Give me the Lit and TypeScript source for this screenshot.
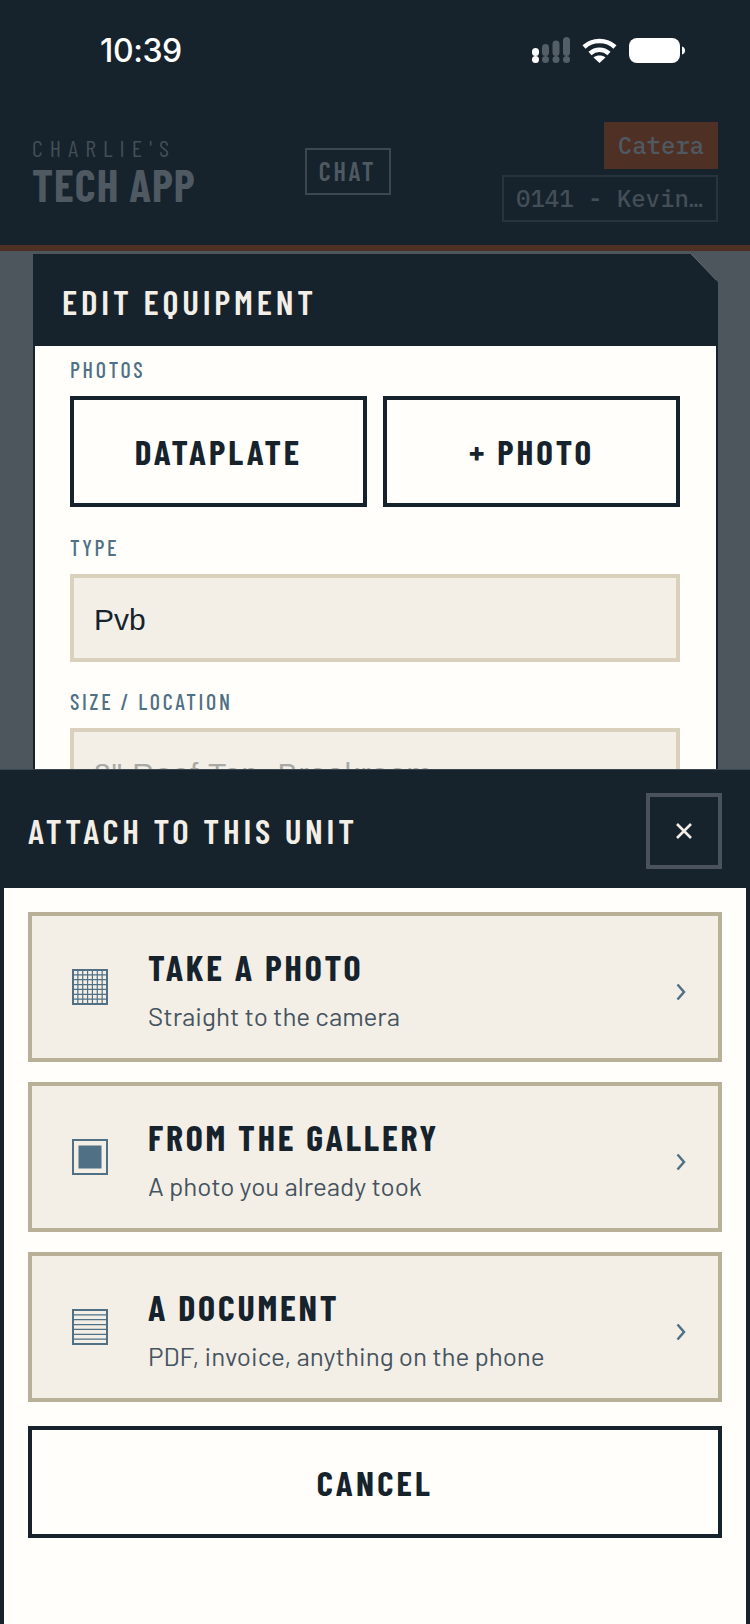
import {css, html, LitElement, svg} from 'lit';
import {customElement} from 'lit/decorators.js';

const gridLines = (horizontalOnly: boolean) => {
  const inner = [1, 2, 3, 4, 5, 6];
  const step = 34 / 7;
  return svg`
    <rect x="1" y="1" width="34" height="34" fill="none" stroke="currentColor" stroke-width="2"/>
    ${inner.map((i) => svg`<path d="M1 ${1 + step * i}H35" stroke="currentColor" stroke-width="1.2"/>`)}
    ${horizontalOnly ? null : inner.map((i) => svg`<path d="M${1 + step * i} 1V35" stroke="currentColor" stroke-width="1.2"/>`)}
  `;
};

const ICONS = {
  camera: gridLines(false),
  gallery: svg`
    <rect x="1" y="1" width="34" height="34" fill="none" stroke="currentColor" stroke-width="2"/>
    <rect x="6.500" y="6.500" width="23" height="23" fill="currentColor"/>
  `,
  doc: gridLines(true),
};

const OPTIONS = [
  {icon: ICONS.camera, title: 'TAKE A PHOTO', sub: 'Straight to the camera'},
  {icon: ICONS.gallery, title: 'FROM THE GALLERY', sub: 'A photo you already took'},
  {icon: ICONS.doc, title: 'A DOCUMENT', sub: 'PDF, invoice, anything on the phone'},
];

@customElement('app-root')
export class AppRoot extends LitElement {
  static styles = css`
    :host {
      display: block;
      --dark: #16222c;
      --cream: #f3efe7;
      --steel: #4f7085;
      --cond: "Barlow Condensed", "Roboto", sans-serif;
      --mono: "IBM Plex Mono", "Liberation Mono", monospace;
    }
    * { box-sizing: border-box; }

    .screen {
      position: relative;
      width: 750px;
      height: 1624px;
      overflow: hidden;
      background: #4e565d;
    }

    .top {
      height: 251px;
      background: var(--dark);
      border-bottom: 6px solid #4f3024;
    }
    .status {
      display: flex;
      align-items: center;
      justify-content: space-between;
      height: 100px;
      padding: 0 65px 0 100px;
      color: #fff;
    }
    .time {
      font: 500 32px "Inter", "Liberation Sans", sans-serif;
      letter-spacing: -0.4px;
    }
    .status-icons { display: flex; align-items: center; gap: 12px; }

    .bar {
      display: flex;
      align-items: center;
      justify-content: space-between;
      height: 100px;
      margin-top: 22px;
      padding: 0 32px;
    }
    .logo { display: flex; flex-direction: column; gap: 4px; width: 161px; margin-top: -4px; }
    .logo-small {
      font: 400 24px/24px var(--cond);
      letter-spacing: 7.100px;
      color: #434e57;
      white-space: nowrap;
    }
    .logo-big {
      font: 700 45px/40px var(--cond);
      letter-spacing: 1px;
      color: #4f5962;
      white-space: nowrap;
    }
    .chat {
      display: flex;
      align-items: center;
      justify-content: center;
      width: 86px;
      height: 47px;
      margin-top: -2px;
      padding-bottom: 2px;
      border: 2px solid #3d4750;
      font: 600 26px var(--cond);
      letter-spacing: 2.800px;
      color: #4f5962;
    }
    .bar-right { display: flex; flex-direction: column; align-items: flex-end; gap: 6px; width: 216px; }
    .tech {
      display: flex;
      align-items: center;
      justify-content: center;
      width: 114px;
      height: 47px;
      padding-bottom: 2px;
      background: #4f3024;
      font: 500 24px var(--mono);
      color: #4f5962;
    }
    .job {
      display: flex;
      align-items: center;
      width: 216px;
      height: 47px;
      padding: 0 0 2px 12px;
      border: 2px solid #27343e;
      font: 500 24px var(--mono);
      color: #434e57;
      white-space: nowrap;
    }

    .modal {
      height: 600px;
      margin: 3px 32px 0 33px;
      background: #fffefa;
      border: solid var(--dark);
      border-width: 0 2px;
      clip-path: polygon(0 0, 658px 0, 685px 28px, 685px 100%, 0 100%);
    }
    .modal-head {
      display: flex;
      align-items: center;
      height: 92px;
      margin: 0 -2px;
      padding: 2px 29px 0;
      background: var(--dark);
      font: 600 35px var(--cond);
      letter-spacing: 3.800px;
      color: var(--cream);
    }
    .modal-body { padding: 12px 36px 0 35px; }
    .label {
      display: block;
      margin-top: -1px;
      font: 500 22px var(--cond);
      letter-spacing: 2.700px;
      line-height: 24px;
      color: var(--steel);
    }
    .photo-row {
      display: grid;
      grid-template-columns: 1fr 1fr;
      gap: 16px;
      margin: 15px 0 29px;
    }
    .photo-btn {
      display: flex;
      align-items: center;
      justify-content: center;
      height: 111px;
      padding-bottom: 2px;
      border: 4px solid var(--dark);
      font: 700 35px var(--cond);
      letter-spacing: 3px;
      color: var(--dark);
    }
    .input {
      display: flex;
      align-items: center;
      height: 88px;
      margin: 15px 0 28px;
      padding: 3px 20px 0;
      border: 4px solid #d9d1bc;
      background: var(--cream);
      font: 400 30px "Liberation Sans", sans-serif;
      color: var(--dark);
    }
    .input.placeholder { color: #a9a9a6; letter-spacing: 0.900px; }

    /* bottom sheet lies over the modal */
    .sheet {
      position: absolute;
      left: 0;
      right: 0;
      top: 769px;
      bottom: 0;
      background: #fffefa;
      border: solid var(--dark);
      border-width: 0 4px;
    }
    .sheet-head {
      display: flex;
      align-items: center;
      justify-content: space-between;
      height: 119px;
      margin: 0 -4px;
      padding: 3px 28px 0;
      background: var(--dark);
      border-top: 1px solid #3a4650;
      font: 600 35px var(--cond);
      letter-spacing: 3.800px;
      color: var(--cream);
    }
    .sheet-title { margin-top: -2px; }
    .close {
      display: flex;
      align-items: center;
      justify-content: center;
      width: 76px;
      height: 76px;
      border: 4px solid #4a535c;
    }
    .sheet-body {
      display: flex;
      flex-direction: column;
      gap: 20px;
      padding: 24px 24px 0;
    }
    .option {
      display: flex;
      align-items: center;
      height: 150px;
      padding: 0 32px 0 40px;
      border: 4px solid #b9b098;
      background: var(--cream);
    }
    .option-icon { flex: none; width: 36px; height: 36px; color: var(--steel); }
    .option-text { flex: 1; margin-left: 40px; padding-top: 3px; }
    .option-title {
      font: 700 36px var(--cond);
      line-height: 42px;
      letter-spacing: 2.800px;
      color: var(--dark);
    }
    .option-sub {
      margin-top: 12px;
      font: 400 26px "Barlow", sans-serif;
      line-height: 32px;
      color: #46545f;
    }
    .chevron { flex: none; width: 10px; height: 18px; margin-top: 9px; color: var(--steel); }
    .cancel {
      display: flex;
      align-items: center;
      justify-content: center;
      height: 112px;
      margin-top: 4px;
      border: 4px solid var(--dark);
      font: 700 35px var(--cond);
      letter-spacing: 3.200px;
      color: var(--dark);
    }
  `;

  renderStatusIcons() {
    return html`
      <div class="status-icons">
        <svg width="38" height="26" viewBox="0 0 38 26">
          <g fill="#fff"><circle cx="3.500" cy="22.500" r="3.500"/><rect x="0" y="11" width="7" height="8" rx="3.500"/></g>
          <g fill="#545e67">
            <circle cx="13.500" cy="22.500" r="3.500"/><circle cx="24" cy="22.500" r="3.500"/><circle cx="34.500" cy="22.500" r="3.500"/>
            <rect x="10" y="7" width="7" height="12" rx="3.500"/>
            <rect x="20.500" y="3.500" width="7" height="15.500" rx="3.500"/>
            <rect x="31" y="0" width="7" height="19" rx="3.500"/>
          </g>
        </svg>
        <svg width="35" height="25" viewBox="0 0 35 25" fill="none" stroke="#fff" stroke-width="4.500">
          <path d="M2 9C10.500 1 24.500 1 33 9"/>
          <path d="M8 15.500C13.500 10.500 21.500 10.500 27 15.500"/>
          <path d="M17.500 25l-6-5.500c3.500-2.600 8.500-2.600 12 0z" fill="#fff" stroke="none"/>
        </svg>
        <svg width="56" height="25" viewBox="0 0 56 25">
          <rect x="0" y="0" width="51" height="25" rx="8" fill="#fff"/>
          <path d="M53 8.500c2 .5 3 2 3 4s-1 3.500-3 4z" fill="#fff"/>
        </svg>
      </div>
    `;
  }

  render() {
    return html`
      <div class="screen">
        <header class="top">
          <div class="status">
            <span class="time">10:39</span>
            ${this.renderStatusIcons()}
          </div>
          <div class="bar">
            <div class="logo">
              <span class="logo-small">CHARLIE'S</span>
              <span class="logo-big">TECH APP</span>
            </div>
            <div class="chat">CHAT</div>
            <div class="bar-right">
              <div class="tech">Catera</div>
              <div class="job">0141 - Kevin…</div>
            </div>
          </div>
        </header>

        <section class="modal">
          <div class="modal-head">EDIT EQUIPMENT</div>
          <div class="modal-body">
            <span class="label">PHOTOS</span>
            <div class="photo-row">
              <div class="photo-btn">DATAPLATE</div>
              <div class="photo-btn">+ PHOTO</div>
            </div>
            <span class="label">TYPE</span>
            <div class="input">Pvb</div>
            <span class="label">SIZE / LOCATION</span>
            <div class="input placeholder">8" Roof Top, Breakroom</div>
          </div>
        </section>

        <section class="sheet">
          <div class="sheet-head">
            <span class="sheet-title">ATTACH TO THIS UNIT</span>
            <div class="close">
              <svg width="18" height="18" viewBox="0 0 18 18" stroke="#f2eee7" stroke-width="2.600" fill="none">
                <path d="M2 2L16 16M16 2L2 16"/>
              </svg>
            </div>
          </div>
          <div class="sheet-body">
            ${OPTIONS.map((option) => html`
              <div class="option">
                <svg class="option-icon" viewBox="0 0 36 36">${option.icon}</svg>
                <div class="option-text">
                  <div class="option-title">${option.title}</div>
                  <div class="option-sub">${option.sub}</div>
                </div>
                <svg class="chevron" viewBox="0 0 10 18" fill="none" stroke="currentColor" stroke-width="2.500">
                  <path d="M1.500 1.500L8 9L1.500 16.500"/>
                </svg>
              </div>
            `)}
            <div class="cancel">CANCEL</div>
          </div>
        </section>
      </div>
    `;
  }
}
